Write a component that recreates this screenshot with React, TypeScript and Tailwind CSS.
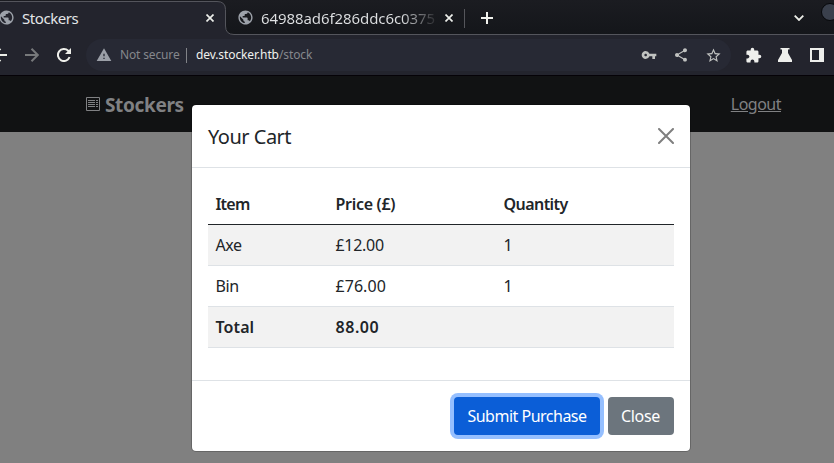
import React from "react";
import { MdExtension, MdPublic, MdShare, MdStarBorder, MdVpnKey, MdWarning } from "react-icons/md";

function TabCross() {
  return (
    <svg className="h-[8px] w-[8px] shrink-0" viewBox="0 0 8 8" stroke="#eceeea" strokeWidth="1.7">
      <path d="M0.5 0.5l7 7M7.5 0.5l-7 7" />
    </svg>
  );
}

function Globe() {
  return <MdPublic className="size-[17px] shrink-0 text-[#9da2aa]" />;
}

function TabStrip() {
  return (
    <div className="relative flex h-[35px] items-start overflow-hidden bg-gradient-to-b from-[#1b1c21] to-[#14161a] text-[15px] leading-[20px] text-[#e4e6e8]">
      <svg className="absolute inset-0" width="834" height="35" fill="none">
        <path d="M0 1.5H217Q225.5 1.5 225.5 9.500V26Q225.500 34.500 234 34.500H834V36H0Z" fill="#23242d" />
        <path d="M0 1.5H217Q225.500 1.500 225.500 9.500V26Q225.500 34.500 234 34.500H834" stroke="#54555c" />
        <circle cx="830" cy="12" r="8.500" fill="#3a404c" stroke="#07080b" />
      </svg>
      <div className="relative flex h-[35px] w-[226px] items-center pr-[12px]">
        <span className="-ml-[2px] flex"><Globe /></span>
        <span className="ml-[7px] flex-1 tracking-[-0.45px]">Stockers</span>
        <TabCross />
      </div>
      <div className="relative flex h-[35px] w-[239px] items-center pl-[11px] pr-[12px]">
        <Globe />
        <span className="ml-[7px] w-[175px] shrink-0 overflow-hidden whitespace-nowrap bg-gradient-to-r from-[#dfe1e3] from-80% to-[#292a2e] bg-clip-text tracking-[-0.08px] text-transparent">64988ad6f286ddc6c0375</span>
        <span className="ml-auto flex"><TabCross /></span>
      </div>
      <div className="relative -ml-px mt-[9px] h-[19px] w-px bg-[#55565b]" />
      <svg className="relative ml-[16px] mt-[12px] size-[12px]" viewBox="0 0 12 12" stroke="#f1f2ed" strokeWidth="2"><path d="M6 0v12M0 6h12" /></svg>
      <svg className="relative ml-auto mr-[30px] mt-[15px] h-[6px] w-[10px]" viewBox="0 0 10 6" fill="none" stroke="#eceee8" strokeWidth="1.8"><path d="M.7.7L5 5 9.300.7" /></svg>
    </div>
  );
}

function Toolbar() {
  return (
    <div className="flex h-[41px] items-center border-b border-[#050207] bg-[#23242d] text-[12.500px]">
      <svg className="-ml-[7px] h-[14px] w-[14px] shrink-0" viewBox="0 0 14 14" fill="none" stroke="#eceee8" strokeWidth="2"><path d="M14 7H1.500M7.500.7L1.200 7l6.300 6.300" /></svg>
      <svg className="ml-[18px] h-[14px] w-[14px] shrink-0" viewBox="0 0 14 14" fill="none" stroke="#77797b" strokeWidth="2"><path d="M0 7h12.500M6.500.7L12.800 7l-6.300 6.300" /></svg>
      <svg className="ml-[18px] h-[14px] w-[14px] shrink-0" viewBox="0 0 14 14" fill="none" stroke="#eff0eb" strokeWidth="2"><path d="M12.600 9A6 6 0 1 1 11.200 2.800L12.500 4.100" /><path d="M14 0v6H8z" fill="#eff0eb" stroke="none" /></svg>
      <div className="ml-[15px] flex h-[32px] w-[645px] items-center rounded-full bg-[#272934] pl-[10px]">
        <MdWarning className="size-[16px] shrink-0 text-[#9b9fa7]" />
        <span className="ml-[8px] w-[60px] whitespace-nowrap text-[12px] tracking-[-0.15px] text-[#85878c]">Not secure</span>
        <span className="ml-[6px] h-[15px] w-px bg-[#818388]" />
        <span className="ml-[9px] text-[12px] tracking-[-0.1px] text-[#eff1ee]">dev.stocker.htb<span className="text-[#85878c]">/stock</span></span>
        <div className="ml-auto mr-[9px] flex items-center gap-[16px] text-[#c0c2c0]">
          <MdVpnKey className="size-[16px]" />
          <MdShare className="size-[16px]" />
          <MdStarBorder className="size-[17px]" />
        </div>
      </div>
      <div className="ml-[14px] flex shrink-0 items-center text-[#eeefec]">
        <MdExtension className="size-[17px]" />
        <svg className="ml-[16px] h-[14px] w-[14px]" viewBox="0 0 14 14" fill="currentColor"><path d="M2.500 0h9v1.500H10V5l4 7v2H0v-2l4-7V1.500H2.500z" /></svg>
        <svg className="ml-[18px] h-[14px] w-[14px]" viewBox="0 0 14 14" fill="currentColor" fillRule="evenodd"><path d="M0 0h14v14H0zM2 2v10h7V2z" /></svg>
      </div>
    </div>
  );
}

function Navbar() {
  return (
    <nav className="flex h-[56px] items-center bg-[#111213] pl-[86px] pr-[53px] text-[#808183]">
      <svg className="h-[14px] w-[14px] shrink-0" viewBox="0 0 14 14" fill="none" stroke="currentColor">
        <path d="M.5.5h13v13H.5z" />
        <path d="M2 3.500h7M2 5.500h7M2 7.500h7M2 9.500h7M10 3.500h2M10 5.500h2M10 7.500h2M10 9.500h2" />
      </svg>
      <span className="ml-[5px] mt-[2px] text-[19px] font-bold leading-[30px] tracking-[-0.35px]">Stockers</span>
      <a className="ml-auto text-[16px] leading-[24px] tracking-[-0.5px] underline">Logout</a>
    </nav>
  );
}

const rows = [
  ["Axe", "£12.00", "1"],
  ["Bin", "£76.00", "1"],
];

const columns = "grid h-[41px] grid-cols-[120px_168px_178px] items-center border-b leading-[24px] [&>span]:pl-[7.5px]";

function CartModal() {
  return (
    <section className="absolute left-[191px] top-[104px] flex h-[348px] w-[500px] flex-col rounded-[5px] border border-black/20 bg-white bg-clip-padding text-[16px] text-[#212529]">
      <header className="flex h-[63px] shrink-0 items-center justify-between border-b border-[#dee2e6] px-4">
        <h5 className="mt-[2px] text-[20px] leading-[30px] tracking-[-0.5px]">Your Cart</h5>
        <svg className="size-[16px]" viewBox="0 0 16 16" stroke="#7f7f7f" strokeWidth="2" strokeLinecap="round"><path d="M1 1l14 14M15 1L1 15" /></svg>
      </header>
      <div className="h-[212px] shrink-0 px-4 pt-4">
        <div className={`${columns} border-[#212529] font-semibold`}><span className="tracking-[-0.8px]">Item</span><span className="tracking-[-0.3px]">Price (£)</span><span className="tracking-[-0.55px]">Quantity</span></div>
        {rows.map((row, i) => (
          <div key={row[0]} className={`${columns} border-[#dee2e6] ${i % 2 ? "bg-white" : "bg-[#f2f2f2]"}`}>
            {row.map((cell, j) => <span key={j} className={j === 0 ? "tracking-[-0.4px]" : i === 1 ? "tracking-[0.05px]" : "tracking-[-0.3px]"}>{cell}</span>)}
          </div>
        ))}
        <div className={`${columns} border-[#dee2e6] bg-[#f2f2f2] font-semibold`}><span className="tracking-[0.1px]">Total</span><span className="tracking-[0.55px]">88.00</span></div>
      </div>
      <footer className="flex grow items-center justify-end gap-2 border-t border-[#dee2e6] px-4">
        <button className="h-[38px] w-[146px] whitespace-nowrap rounded-[4px] bg-[#0b5ed7] tracking-[-0.5px] text-white ring-4 ring-[#95bfff]">Submit Purchase</button>
        <button className="h-[38px] w-[66px] rounded-[4px] bg-[#6c757d] pr-px tracking-[-0.3px] text-white">Close</button>
      </footer>
    </section>
  );
}

export default function App() {
  return (
    <main className="relative h-[463px] w-[834px] overflow-hidden bg-[#808080] font-['Noto_Sans',sans-serif]">
      <TabStrip />
      <Toolbar />
      <Navbar />
      <CartModal />
    </main>
  );
}
